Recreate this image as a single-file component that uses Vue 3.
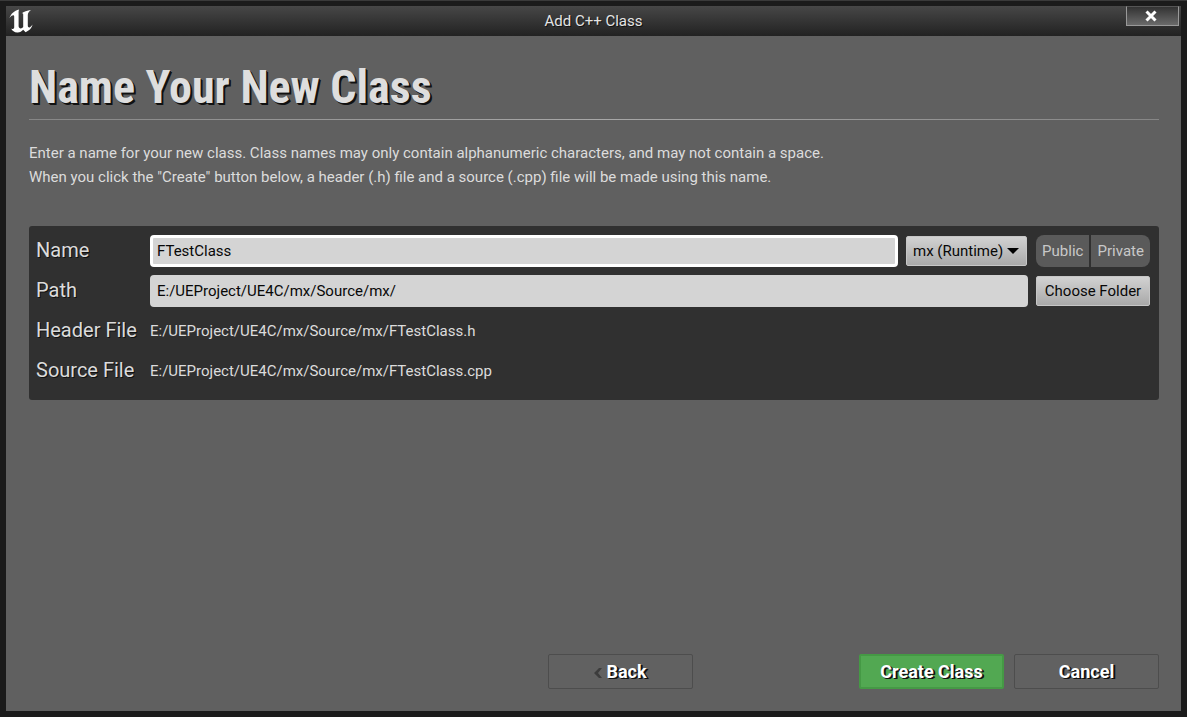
<script setup>
import { ref } from 'vue'

const className = ref('FTestClass')
const folder = ref('E:/UEProject/UE4C/mx/Source/mx/')
const moduleName = ref('mx (Runtime)')
</script>

<template>
  <div class="window">
    <header class="titlebar">
      <svg class="logo" viewBox="0 0 24 24" aria-hidden="true">
        <path d="M0.5 9C1.8 4.8 5 1.6 10.2 0.4C9.6 1.6 9.6 2.6 9.6 4V17.2C9.8 18.6 10.6 19.4 11.7 19.4C12.7 19.4 13.5 18.8 14.2 18V5.6C14.2 4.6 13.7 4.2 12.4 4.4C14.6 2.6 18.4 1.5 22 1C20.2 2.5 18.8 3.8 18.8 6V16.8C18.9 18.3 20 18.8 21 18.2C22 17.6 22.8 16.8 23.6 15.6C22.8 19.2 20.2 21.8 16.6 23.2L14.2 20.8C12.6 22.4 10.8 23.8 8.2 23.6C5.4 23.4 3.2 21.8 2.3 19.8C3.8 20.2 5.2 19.8 5.2 18.2V7.6C5.2 6 4 5.8 2.6 6.8C1.8 7.4 1.1 8.2 0.5 9Z" />
      </svg>
      <span class="caption">Add C++ Class</span>
      <button class="close" type="button" aria-label="Close">
        <svg viewBox="0 0 14 12" aria-hidden="true"><path d="M2.5 1.5L11.5 10.5M11.5 1.5L2.5 10.5" /></svg>
      </button>
    </header>

    <main class="content">
      <h1>Name Your New Class</h1>
      <hr />
      <p class="intro">
        Enter a name for your new class. Class names may only contain alphanumeric characters, and may not contain a space.<br />
        When you click the "Create" button below, a header (.h) file and a source (.cpp) file will be made using this name.
      </p>

      <form class="panel" @submit.prevent>
        <label for="name">Name</label>
        <div class="row">
          <input id="name" v-model="className" class="field active" type="text" />
          <div class="picker">
            <select v-model="moduleName" aria-label="Module">
              <option>mx (Runtime)</option>
            </select>
            <svg viewBox="0 0 12 6" aria-hidden="true"><path d="M0 0H12L6 6Z" /></svg>
          </div>
          <div class="access side">
            <button type="button">Public</button>
            <button type="button">Private</button>
          </div>
        </div>

        <label for="path">Path</label>
        <div class="row">
          <input id="path" v-model="folder" class="field" type="text" />
          <button class="choose side" type="button">Choose Folder</button>
        </div>

        <span class="label">Header File</span>
        <span class="value">{{ folder }}{{ className }}.h</span>

        <span class="label">Source File</span>
        <span class="value">{{ folder }}{{ className }}.cpp</span>
      </form>

      <footer>
        <button class="action back" type="button">
          <svg viewBox="0 0 8 10" aria-hidden="true"><path d="M5 0L0 5L5 10H8L4 5L8 0Z" /></svg>Back
        </button>
        <button class="action create" type="button">Create Class</button>
        <button class="action" type="button">Cancel</button>
      </footer>
    </main>
  </div>
</template>

<style>
html,
body,
#app {
  height: 100%;
}
body {
  margin: 0;
  background: #1b1b1b;
}
</style>

<style scoped>
.window {
  box-sizing: border-box;
  display: flex;
  flex-direction: column;
  min-height: 100%;
  padding: 5px 6px 6px;
  background: #1b1b1b;
  border-top: 1px solid #3a3a3a;
  font: 15px/24px Roboto, sans-serif;
  color: #dcdcdc;
}
button,
input,
select {
  box-sizing: border-box;
  margin: 0;
  font: inherit;
  color: inherit;
}
.titlebar {
  display: grid;
  grid-template-columns: 1fr auto 1fr;
  align-items: start;
  height: 30px;
  background: linear-gradient(#474747, #222);
}
.logo {
  width: 24px;
  height: 24px;
  margin: 3px;
  fill: #fff;
}
.caption {
  padding-top: 3px;
  color: #e4e4e4;
  text-shadow: 1px 1px #111;
}
.close {
  display: grid;
  place-items: center;
  justify-self: end;
  width: 53px;
  height: 20px;
  margin-right: 2px;
  padding: 0;
  background: linear-gradient(#333, #6a6a6a);
  border: 1px solid #999;
  border-top-color: #555;
}
.close svg {
  width: 14px;
  height: 12px;
  margin-right: 3px;
  fill: none;
  stroke: #fff;
  stroke-width: 3;
}
.content {
  flex: 1;
  display: flex;
  flex-direction: column;
  padding: 23px 22px 22px 23px;
  background: #606060;
}
h1 {
  margin: 0;
  font: 700 46px/56px "Roboto Condensed", Roboto, sans-serif;
  color: #dedede;
  text-shadow: 1px 1px #111, 2px 2px #111;
}
hr {
  width: 100%;
  height: 1px;
  margin: 4px 0 21px;
  border: 0;
  background: linear-gradient(90deg, #868686, #a8a8a8 50%, #868686);
}
.intro {
  margin: 0 0 37px;
}
.panel {
  display: grid;
  grid-template-columns: 114px minmax(0, 1fr);
  grid-auto-rows: 40px;
  align-items: center;
  padding: 5px 9px 9px 7px;
  background: #303030;
  border-radius: 3px;
}
.panel label,
.label {
  padding-bottom: 2px;
  font-size: 20px;
  text-shadow: 1px 1px #111;
}
.row {
  display: flex;
  align-items: center;
  gap: 8px;
}
.field {
  flex: 1;
  min-width: 0;
  height: 32px;
  padding: 0 4px;
  color: #080808;
  background: #d4d4d4;
  border: 3px solid #d4d4d4;
  border-radius: 4px;
  outline: 0;
}
.active {
  border-color: #fff;
}
.picker {
  position: relative;
  margin-right: 1px;
}
.picker select,
.choose {
  height: 30px;
  color: #080808;
  background: linear-gradient(#d2d2d2, #a9a9a9);
  border: 1px solid #c6c6c6;
  border-radius: 2px;
}
.picker select {
  display: block;
  width: 121px;
  padding: 0 6px;
  appearance: none;
}
.picker svg {
  position: absolute;
  top: 12px;
  right: 8px;
  width: 12px;
  height: 6px;
  pointer-events: none;
}
.side {
  width: 114px;
}
.choose {
  padding: 0;
}
.access {
  display: flex;
  gap: 2px;
  height: 32px;
  overflow: hidden;
  border-radius: 8px;
}
.access button {
  flex: auto;
  padding: 0;
  color: #c8c8c8;
  background: #5a5a5a;
  border: 0;
}
footer {
  display: flex;
  justify-content: flex-end;
  gap: 10px;
  margin-top: auto;
}
.action {
  width: 145px;
  height: 35px;
  padding: 0;
  font-size: 18px;
  font-weight: 700;
  color: #fff;
  background: #616161;
  border: 1px solid #4d4d4d;
  border-radius: 2px;
  text-shadow: 1px 1px #111, 2px 1px #111;
}
.back {
  margin-right: 156px;
}
.back svg {
  width: 8px;
  height: 10px;
  margin-right: 4px;
  fill: #3c3c3c;
}
.create {
  background: #52a852;
  border: 2px solid #459945;
}
</style>
